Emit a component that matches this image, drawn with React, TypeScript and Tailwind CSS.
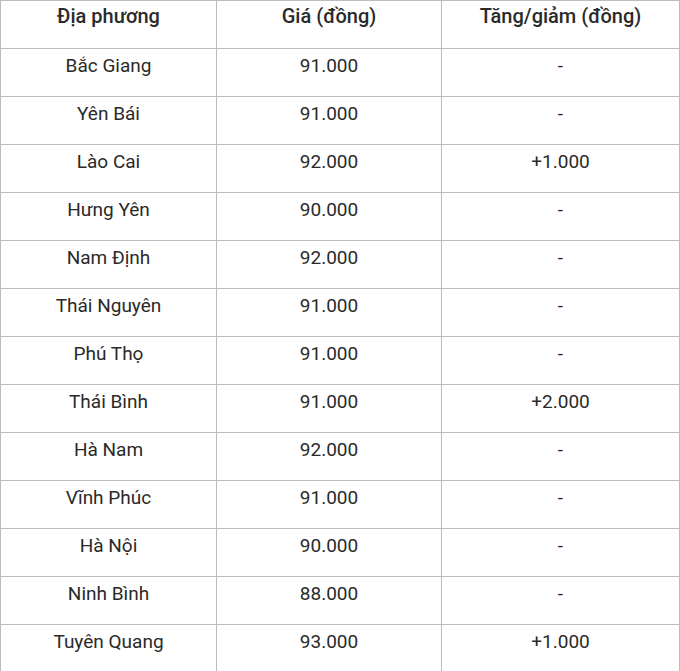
const rows: [string, string, string][] = [
  ['Bắc Giang', '91.000', '-'],
  ['Yên Bái', '91.000', '-'],
  ['Lào Cai', '92.000', '+1.000'],
  ['Hưng Yên', '90.000', '-'],
  ['Nam Định', '92.000', '-'],
  ['Thái Nguyên', '91.000', '-'],
  ['Phú Thọ', '91.000', '-'],
  ['Thái Bình', '91.000', '+2.000'],
  ['Hà Nam', '92.000', '-'],
  ['Vĩnh Phúc', '91.000', '-'],
  ['Hà Nội', '90.000', '-'],
  ['Ninh Bình', '88.000', '-'],
  ['Tuyên Quang', '93.000', '+1.000'],
];

const cell = 'h-[48px] border border-[#bcbcbc] align-top text-center';

export default function App() {
  return (
    <div className="w-[680px] h-[671px] overflow-hidden bg-white font-['Roboto',sans-serif] leading-[27px] text-[#2a2a2a]">
      <table className="w-[680px] border-collapse table-fixed">
        <colgroup>
          <col className="w-[216px]" />
          <col className="w-[225px]" />
          <col />
        </colgroup>
        <thead>
          <tr>
            <th className={`${cell} pt-[2px] text-[20px] font-medium`}>Địa phương</th>
            <th className={`${cell} pt-[2px] text-[20px] font-medium`}>Giá (đồng)</th>
            <th className={`${cell} pt-[2px] text-[20px] font-medium`}>Tăng/giảm (đồng)</th>
          </tr>
        </thead>
        <tbody>
          {rows.map((r) => (
            <tr key={r[0]}>
              <td className={`${cell} pt-[3px] text-[19px]`}>{r[0]}</td>
              <td className={`${cell} pt-[3px] text-[19px]`}>{r[1]}</td>
              <td className={`${cell} pt-[3px] text-[19px]`}>{r[2]}</td>
            </tr>
          ))}
        </tbody>
      </table>
    </div>
  );
}
